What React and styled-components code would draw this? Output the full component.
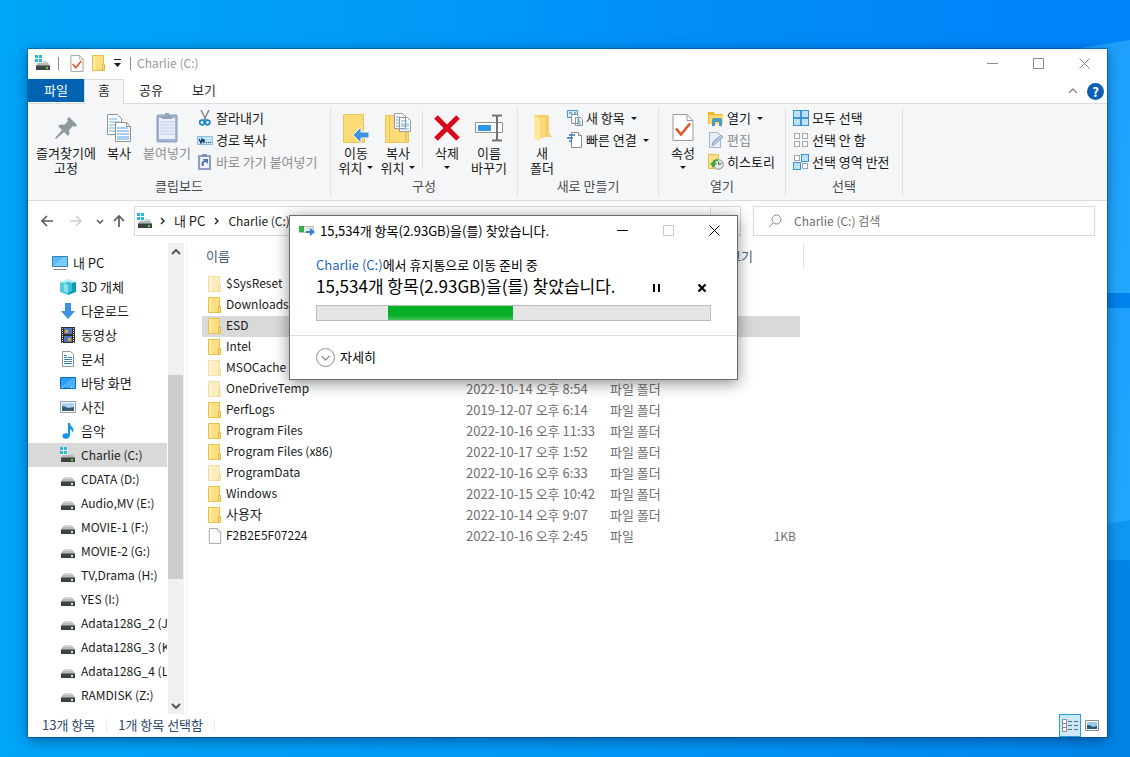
import { useState } from "react";
import styled, { createGlobalStyle } from "styled-components";

const GlobalStyle = createGlobalStyle`
  * {
    box-sizing: border-box;
  }
  body {
    margin: 0;
    font-family: "Noto Sans CJK KR", "Noto Sans", sans-serif;
    font-size: 13px;
    line-height: 15px;
    color: #1a1a1a;
  }
  button, input {
    font: inherit;
    color: inherit;
    border: none;
    background: none;
    padding: 0;
    margin: 0;
  }
  svg {
    display: block;
    flex: none;
  }
`;

const Desktop = styled.div`
  position: relative;
  display: flex;
  min-height: 100vh;
  padding: 49px 23px 20px 28px;
  background: linear-gradient(90deg, #00a5f7 0%, #0098f6 50%, #0086ee 100%);
`;
const Wallpaper = styled.svg`
  position: absolute;
  right: 0;
  top: 0;
  width: 100%;
  height: 100%;
`;
const Window = styled.main`
  position: relative;
  display: flex;
  flex-direction: column;
  flex: 1;
  min-width: 0;
  background: #ffffff;
  outline: 1px solid rgba(0, 70, 130, 0.45);
  box-shadow: 0 3px 12px rgba(0, 20, 60, 0.5);
`;
const Label = styled.span`
  padding-bottom: 2px;
  font-size: ${(props) => (props.$small ? 12 : 13)}px;
`;
const TitleBar = styled.header`
  display: flex;
  align-items: center;
  height: 30px;
  padding: 0 0 2px 7px;
  color: #999999;
`;
const QuickButton = styled.button`
  display: flex;
  align-items: center;
  justify-content: center;
  width: ${(props) => props.$width || 22}px;
  height: 22px;
`;
const Bar = styled.span`
  width: 1px;
  height: 13px;
  margin: 0 ${(props) => props.$gap || 6}px;
  background: #8a8a8a;
`;
const Caption = styled.div`
  display: flex;
  margin-left: auto;
`;
const CaptionButton = styled.button`
  display: flex;
  align-items: center;
  justify-content: center;
  width: 46px;
  height: 28px;
  color: ${(props) => props.$color || "#8a8a8a"};
`;
const Tabs = styled.nav`
  display: flex;
  height: 25px;
  border-bottom: 1px solid #dadbdc;
`;
const Tab = styled.button`
  width: ${(props) => props.$width}px;
  height: ${(props) => (props.$active ? 25 : 23)}px;
  padding-bottom: ${(props) => (props.$active ? 5 : 2)}px;
  color: ${(props) => (props.$file ? "#ffffff" : "#2a2a2a")};
  background: ${(props) => (props.$file ? "#0063b1" : props.$active ? "#f5f6f7" : "none")};
  border: solid #dadbdc;
  border-width: ${(props) => (props.$active ? "1px 1px 0 1px" : "0")};
`;
const TabTools = styled.div`
  display: flex;
  align-items: center;
  gap: 9px;
  margin-left: auto;
  padding-right: 3px;
  color: #8a8a8a;
`;
const Help = styled.button`
  width: 17px;
  height: 17px;
  border-radius: 50%;
  background: #0c5fb4;
  color: #ffffff;
  font-size: 13px;
  font-weight: 700;
  line-height: 17px;
`;
const Ribbon = styled.section`
  display: flex;
  height: 97px;
  padding: 3px 0;
  background: #f5f6f7;
  border-bottom: 1px solid #dadbdc;
`;
const Group = styled.div`
  display: flex;
  flex-direction: column;
  width: ${(props) => props.$width}px;
  border-right: 1px solid #e2e3e4;
`;
const GroupBody = styled.div`
  display: flex;
  height: 72px;
  padding-left: ${(props) => props.$left || 0}px;
`;
const GroupLabel = styled.div`
  line-height: 22px;
  text-align: center;
  color: #4a4a4a;
`;
const BigButton = styled.button`
  display: flex;
  flex-direction: column;
  align-items: center;
  width: ${(props) => props.$width || 42}px;
  padding-top: 3px;
  white-space: nowrap;
  color: ${(props) => (props.$off ? "#8d8d8d" : "inherit")};
`;
const BigIcon = styled.span`
  display: flex;
  align-items: center;
  height: 35px;
`;
const Line = styled.span`
  display: flex;
  align-items: center;
  gap: 5px;
  height: 15px;
`;
const SmallColumn = styled.div`
  display: flex;
  flex-direction: column;
  margin-left: ${(props) => props.$left || 0}px;
`;
const SmallButton = styled.button`
  display: flex;
  align-items: center;
  gap: 3px;
  height: 22px;
  white-space: nowrap;
  color: ${(props) => (props.$off ? "#8d8d8d" : "inherit")};
`;
const Divider = styled.span`
  width: 1px;
  height: 58px;
  margin: 4px 3px 0;
  background: #e2e3e4;
`;
const Caret = styled.span`
  margin-left: ${(props) => props.$left || 0}px;
  border: solid transparent;
  border-width: 3px 3px 0;
  border-top-color: #1a1a1a;
`;
const AddressRow = styled.div`
  display: flex;
  align-items: center;
  height: 42px;
  padding: 0 12px 2px 10px;
`;
const NavButton = styled.button`
  display: flex;
  align-items: center;
  justify-content: center;
  width: ${(props) => props.$width}px;
  height: 30px;
  color: ${(props) => (props.$off ? "#cfcfcf" : "#5c5c5c")};
`;
const AddressBox = styled.div`
  display: flex;
  align-items: center;
  flex: 616;
  height: 30px;
  padding-left: 2px;
  border: 1px solid #d9d9d9;
`;
const Crumb = styled.button`
  display: flex;
  align-items: center;
  height: 28px;
  padding: ${(props) => (props.$first ? "0 0 0 7px" : "0 9px")};
  white-space: nowrap;
`;
const AddressEnd = styled.span`
  width: 30px;
  height: 28px;
  margin-left: auto;
  border-left: 1px solid #d9d9d9;
`;
const SearchBox = styled.label`
  display: flex;
  align-items: center;
  flex: 333;
  gap: 12px;
  height: 30px;
  margin-left: 12px;
  padding-left: 14px;
  border: 1px solid #d9d9d9;
  color: #757575;
`;
const SearchInput = styled.input`
  flex: 1;
  min-width: 0;
  padding-bottom: 2px;
  font-size: 12px;
  outline: none;
  &::placeholder {
    color: #6d6d6d;
    opacity: 1;
  }
`;
const Body = styled.div`
  display: flex;
  flex: 1;
`;
const Tree = styled.nav`
  width: 140px;
  padding-top: 8px;
  overflow: hidden;
`;
const TreeItem = styled.button`
  display: flex;
  align-items: center;
  gap: 5px;
  width: 139px;
  height: 24px;
  padding-left: ${(props) => (props.$root ? 24 : 32)}px;
  overflow: hidden;
  white-space: nowrap;
  background: ${(props) => (props.$selected ? "#d9d9d9" : "none")};
`;
const Scrollbar = styled.div`
  display: flex;
  flex-direction: column;
  width: 16px;
  background: #f0f0f0;
  color: #505050;
`;
const ScrollButton = styled.button`
  display: flex;
  align-items: center;
  justify-content: center;
  height: 17px;
`;
const Track = styled.div`
  display: flex;
  flex-direction: column;
  flex: 1;
`;
const Space = styled.span`
  flex: ${(props) => props.$size};
`;
const Thumb = styled.span`
  flex: 204;
  margin-right: 1px;
  background: #cdcdcd;
`;
const Files = styled.section`
  flex: 1;
  min-width: 0;
  margin-left: 2px;
  padding-left: 15px;
  border-left: 1px solid #f3f3f3;
`;
const FileTable = styled.table`
  width: 602px;
  table-layout: fixed;
  border-collapse: separate;
  border-spacing: 0;
  th {
    height: 26px;
    padding: 0 4px 2px;
    font-weight: 400;
    text-align: left;
    color: #4c607a;
  }
  th:last-child {
    border-right: 1px solid #e2e2e2;
  }
  tbody::before {
    content: "";
    display: block;
    height: 5px;
  }
  td {
    height: 21px;
    padding: 0 4px 2px;
    color: #707070;
    white-space: nowrap;
  }
  td:nth-child(4) {
    font-size: 12px;
    text-align: right;
  }
`;
const FileRow = styled.tr`
  td:nth-child(-n + 4) {
    background: ${(props) => (props.$selected ? "#d9d9d9" : "none")};
  }
`;
const FileName = styled.span`
  display: flex;
  align-items: center;
  gap: 4px;
  padding-left: 2px;
  color: #1a1a1a;
`;
const StatusBar = styled.footer`
  display: flex;
  align-items: center;
  height: 23px;
  padding: 0 4px 0 14px;
  color: #2f4a6b;
`;
const StatusLine = styled.span`
  width: 1px;
  height: 13px;
  margin: 0 11px;
  background: #ebebeb;
`;
const ViewButton = styled.button`
  display: flex;
  align-items: center;
  justify-content: center;
  width: 22px;
  height: 23px;
  background: ${(props) => (props.$active ? "#cbe8f6" : "none")};
  border: 1px solid ${(props) => (props.$active ? "#26a0da" : "transparent")};
`;
const Dialog = styled.section`
  position: absolute;
  left: 289px;
  top: 215px;
  width: 449px;
  background: #ffffff;
  border: 1px solid #6b6b6b;
  box-shadow: 0 3px 14px rgba(0, 0, 0, 0.45);
`;
const DialogTitle = styled.header`
  display: flex;
  align-items: center;
  gap: 5px;
  height: 30px;
  padding: 0 0 2px 9px;
  color: #000000;
`;
const DialogBody = styled.div`
  padding: 11px 26px 14px;
  color: #000000;
`;
const Source = styled.a`
  color: #1b66c0;
  text-decoration: none;
`;
const StateRow = styled.div`
  display: flex;
  align-items: center;
  height: 26px;
  font-size: 17px;
`;
const StateButton = styled.button`
  display: flex;
  align-items: center;
  justify-content: center;
  width: 18px;
  height: 18px;
  margin: 5px 0 0 ${(props) => (props.$first ? "auto" : "28px")};
`;
const Progress = styled.div`
  height: 16px;
  margin-top: 7px;
  background: #e6e6e6;
  border: 1px solid #bcbcbc;
`;
const Chunk = styled.div`
  width: 32%;
  height: 14px;
  margin-left: 18%;
  background: linear-gradient(#06b025 65%, #45c05a);
`;
const DialogFooter = styled.footer`
  display: flex;
  height: 44px;
  padding-left: 26px;
  border-top: 1px solid #dfdfdf;
`;
const MoreButton = styled.button`
  display: flex;
  align-items: center;
  gap: 5px;
  color: #000000;
`;

function Chevron({ d = "M1 1l3 3-3 3", w = 5, h = 8, size = 1.3 }) {
  return (
    <svg width={w} height={h} viewBox={`0 0 ${w} ${h}`} fill="none" stroke="currentColor" strokeWidth={size}>
      <path d={d} />
    </svg>
  );
}

function Close({ size = 11, width = 1 }) {
  return (
    <svg width={size} height={size} viewBox="0 0 11 11" fill="none" stroke="currentColor" strokeWidth={width}>
      <path d="M.5.5l10 10M10.5.5l-10 10" />
    </svg>
  );
}

function Minimize() {
  return (
    <svg width="11" height="11" shapeRendering="crispEdges">
      <path d="M0 5h11v1H0z" fill="currentColor" />
    </svg>
  );
}

function Maximize() {
  return (
    <svg width="11" height="11" fill="none" stroke="currentColor">
      <path d="M.5.5h10v10H.5z" />
    </svg>
  );
}

function Drive({ system }) {
  return (
    <svg width="16" height="16" viewBox="0 0 16 16">
      <path d="M4 6h8l3 5H1z" fill="#d3d6d5" />
      <path d="M3 8h10l2 3H1z" fill="#b4b9b8" />
      <path d="M1 11h14v4H1z" fill="#3d4543" />
      <path d="M1 10h14v1H1z" fill="#79807e" />
      <path d="M11 12h2v2h-2z" fill={system ? "#5ad543" : "#d5e6dd"} />
      {system && (
        <>
          <path d="M0 0h8v8H0z" fill="#fff" opacity=".6" />
          <path d="M0 0h3v3H0zM4 0h3v3H4zM0 4h3v3H0zM4 4h3v3H4z" fill="#23b8e0" />
        </>
      )}
    </svg>
  );
}

function Folder({ w = 14, h = 16, pale }) {
  return (
    <svg width={w} height={h} viewBox="0 0 14 16" opacity={pale ? 0.5 : 1}>
      <path d="M.5.5h11v15H.5z" fill="#fbdf80" stroke="#e9bf4c" />
      <path d="M1 1h3v14H1z" fill="#fee99d" />
      <path d="M10.500 9.500h2v6h-2z" fill="#fbdf80" stroke="#e3b541" />
    </svg>
  );
}

function Page({ w = 14, h = 17, check }) {
  return (
    <svg width={w} height={h} viewBox="0 0 22 28" fill="none">
      <path d="M1 1h14l6 6v20H1z" fill="#fff" stroke="#9a9a9a" strokeWidth={w > 14 ? 1 : 1.5} />
      <path d="M15 1v6h6" stroke="#9a9a9a" />
      {check && <path d="M4 15l5 6L18 10" stroke="#e25822" strokeWidth="2.600" />}
    </svg>
  );
}

function Pin() {
  return (
    <svg width="22" height="22" viewBox="0 0 22 22" fill="#8e989f">
      <path d="M14 0l8 8-2 2-2-1-4 4c1 3 0 4-1 6l-4-4-8 7-1-1 7-8-4-4c2-1 3-2 6-1l4-4-1-2z" />
    </svg>
  );
}

function CopyPages() {
  return (
    <svg width="26" height="30" viewBox="0 0 26 30" fill="#fff" stroke="#929292">
      <path d="M1.500 1.500h10l4 4v16h-14z" />
      <path d="M3 6h8M3 9h10M3 12h10M3 15h10M3 18h10" stroke="#6eaee2" />
      <path d="M9.500 9.500h11l4 4v15h-15z" />
      <path d="M20.500 9.500v4h4" fill="none" />
      <path d="M11 15h11M11 18h12M11 21h12M11 24h12M11 26h12" stroke="#4f9ae0" />
    </svg>
  );
}

function Clipboard() {
  return (
    <svg width="22" height="31" viewBox="0 0 22 31">
      <rect x="1" y="3" width="20" height="27" rx="1" fill="#a3b3d2" stroke="#8c9dc0" />
      <path d="M3 6h16v21H3z" fill="#eaf0fb" />
      <path d="M4 10h14M4 13h14M4 16h14M4 19h14M4 22h14" stroke="#bccde6" />
      <path d="M6 7V4h3V1h4v3h3v3z" fill="#98a3b7" />
    </svg>
  );
}

function Scissors() {
  return (
    <svg width="16" height="16" viewBox="0 0 16 16" fill="none">
      <path d="M4 0l5 10M12 0L7 10" stroke="#7e8a96" strokeWidth="1.500" />
      <circle cx="5" cy="12.500" r="2.300" stroke="#1686c4" strokeWidth="1.700" />
      <circle cx="10.500" cy="12.500" r="2.300" stroke="#1686c4" strokeWidth="1.700" />
    </svg>
  );
}

function PathIcon() {
  return (
    <svg width="16" height="16" viewBox="0 0 16 16">
      <path d="M.5 4.500h15v8H.5z" fill="#c4e4fa" stroke="#87bde6" />
      <path d="M2 7l2 4 1-4 2 4V7" fill="none" stroke="#143050" strokeWidth="1.200" />
      <path d="M9 10h1v1H9zM11 10h1v1h-1zM13 10h1v1h-1z" fill="#143050" />
    </svg>
  );
}

function PasteShortcut() {
  return (
    <svg width="16" height="16" viewBox="0 0 16 16">
      <path d="M1 1h13v15H1z" fill="#8d9fc2" />
      <path d="M3 3h9v11H3z" fill="#eaf1fb" />
      <path d="M5 0h5v3H5z" fill="#8292ac" />
      <path d="M5 12c-1-3 0-5 2-5L6 5h5v5L9 8c-2 0-3 1-2 4z" fill="#5673a6" />
    </svg>
  );
}

function MoveTo() {
  return (
    <svg width="28" height="32" viewBox="0 0 28 32">
      <path d="M1.500 2.500h20v28h-20z" fill="#fbdc78" stroke="#e9c45c" />
      <path d="M20.500 20.500h2v10h-2z" fill="#fbdc78" stroke="#e9c45c" />
      <path d="M11 23l8-8v5h8v6h-8v5z" fill="#3d94dc" stroke="#f5f6f7" />
    </svg>
  );
}

function CopyTo() {
  return (
    <svg width="28" height="32" viewBox="0 0 28 32">
      <path d="M1.500 3.500h20v27h-20z" fill="#fbdc78" stroke="#e9c45c" />
      <path d="M5 4h1v26H5z" fill="#eac45f" />
      <path d="M22.500 20.500h2v10h-2z" fill="#fbdc78" stroke="#e9c45c" />
      <path d="M10.500 1.500h8l3 3v12h-11zM15.500 5.500h8l3 3v11h-11z" fill="#fff" stroke="#9a9a9a" />
      <path d="M17 9h6M17 12h8M17 14h8M17 17h8M12 5h4M12 8h3M12 11h3M12 14h3" stroke="#67a5db" />
    </svg>
  );
}

function Rename() {
  return (
    <svg width="28" height="28" viewBox="0 0 28 28" fill="none">
      <path d="M.5 8.500h27v10H.5z" fill="#fff" stroke="#929292" />
      <path d="M3 11h13v6H3z" fill="#3296e8" />
      <path d="M17 1.500h4l1 1 1-1h4M22 2v23M17 26.500h4l1-1 1 1h4" stroke="#737373" strokeWidth="2" />
    </svg>
  );
}

function NewFolder() {
  return (
    <svg width="21" height="30" viewBox="0 0 21 30">
      <path d="M2 2h15v18l3 4H2z" fill="#f4d06b" />
      <path d="M2 2l6 4v23l-6-4z" fill="#fee89b" />
      <path d="M8 6l5-2v20l-5 2z" fill="#f9da7e" />
    </svg>
  );
}

function NewItem() {
  return (
    <svg width="16" height="16" viewBox="0 0 16 16" fill="#fff" stroke="#8c959e">
      <path d="M.5.5h10v7H.5z" fill="#d4ecfb" stroke="#4198cf" />
      <path d="M2 3h3M7 3h2" stroke="#2471a8" />
      <path d="M4.500 4.500h5l2 2v7h-7zM8.500 7.500h5l2 2v6h-7z" />
      <path d="M10 10h3M10 12h4M10 14h4" stroke="#5a98cf" />
    </svg>
  );
}

function EasyAccess() {
  return (
    <svg width="16" height="16" viewBox="0 0 16 16" fill="#fff" stroke="#8c8c8c">
      <path d="M4.500.5h7l3 3v12h-10z" />
      <path d="M11.500.5v3h3" />
      <path d="M2 3h6M0 6h6M2 9h3" stroke="#2874c4" strokeWidth="1.300" />
    </svg>
  );
}

function OpenIcon() {
  return (
    <svg width="16" height="16" viewBox="0 0 16 16">
      <path d="M0 2h6l1 2h8v10H0z" fill="#ebb52f" />
      <path d="M1 5h14v9H1z" fill="#ffd766" />
      <path d="M4 16V10q0-2 2-2h6q2 0 2 2v6h-3v-4H7v4z" fill="#4a9bc9" />
    </svg>
  );
}

function EditIcon() {
  return (
    <svg width="16" height="16" viewBox="0 0 16 16">
      <path d="M1.500.5h8l3 3v12h-11z" fill="#e6eefa" stroke="#a4b5d2" />
      <path d="M4 14l1-4 8-7 2 2-8 7z" fill="#b4c7e5" stroke="#8ea5cb" />
    </svg>
  );
}

function HistoryIcon() {
  return (
    <svg width="16" height="16" viewBox="0 0 16 16">
      <path d="M.5.5h10v14H.5z" fill="#fbe08a" stroke="#e3bd50" />
      <circle cx="10.500" cy="10.500" r="4.800" fill="#e4e6e8" stroke="#8b8f92" />
      <path d="M10.500 7.500v3l3-1" fill="none" stroke="#5d6366" />
      <path d="M9 5C5 5 4 9 4 9H2l3 5 4-5H7q0-2 3-2z" fill="#43a83c" />
    </svg>
  );
}

// which = indexes of the filled squares
function Squares({ which }) {
  return (
    <svg width="16" height="16" viewBox="0 0 16 16">
      {[0, 1, 2, 3].map((i) => {
        const on = which.includes(i);
        return (
          <rect
            key={i}
            x={(i % 2) * 8 + (on ? 0.5 : 1.5)}
            y={(i > 1 ? 8 : 0) + (on ? 0.5 : 1.5)}
            width={on ? 7 : 5}
            height={on ? 7 : 5}
            fill={on ? "#bfe2fb" : "#fff"}
            stroke={on ? "#3b92d6" : "#a6a6a6"}
          />
        );
      })}
    </svg>
  );
}

function Arrow({ d }) {
  return (
    <svg width="14" height="14" viewBox="0 0 14 14" fill="none" stroke="currentColor" strokeWidth="1.700">
      <path d={d} />
    </svg>
  );
}

function TreeIcon({ kind }) {
  if (kind === "drive" || kind === "system") return <Drive system={kind === "system"} />;
  if (kind === "doc") {
    return (
      <svg width="16" height="16" viewBox="0 0 16 16">
        <path d="M2.500.5h8l3 3v12h-11z" fill="#fff" stroke="#8e979e" />
        <path d="M4 4.500h3M4 6.500h3M8 6.500h4M4 8.500h8M4 10.500h3M8 10.500h4M4 12.500h8" stroke="#3585bd" />
      </svg>
    );
  }
  return (
    <svg width="16" height="16" viewBox="0 0 16 16">
      {kind === "pc" && (
        <>
          <path d="M.5 1.500h15v10H.5z" fill="#5bbcf4" stroke="#3484bb" />
          <path d="M1 11L12 2h3v9z" fill="#8fd3f9" opacity=".6" />
          <path d="M2 14h12l1 1H1z" fill="#7e8b94" />
        </>
      )}
      {kind === "cube" && (
        <>
          <path d="M0 3l8-3 8 3-8 3z" fill="#b2ecf2" />
          <path d="M0 3l8 2v11l-8-3z" fill="#54cbdc" />
          <path d="M8 5l8-2v10l-8 3z" fill="#109db5" />
          <path d="M4 4l4-1 4 1v8l-4 2-4-2z" fill="#3bbfd2" />
          <path d="M4 4l4 2v8l-4-2z" fill="#8ce1ec" />
        </>
      )}
      {kind === "down" && <path d="M5 0h6v8h4l-7 8-7-8h4z" fill="#3d92e0" />}
      {kind === "video" && (
        <>
          <path d="M1 0h14v16H1z" fill="#2e2e2e" />
          <path d="M4 1h8v6H4zM4 9h8v6H4z" fill="#5674b8" />
          <path d="M5 3h3v3H5zM8 11h3v3H8z" fill="#e4a43c" />
          <path d="M2.500 1v15M13.500 1v15" stroke="#e8e8e8" strokeDasharray="1 1" />
        </>
      )}
      {kind === "desktop" && (
        <>
          <path d="M.5 2.500h15v11H.5z" fill="#2a9df4" stroke="#0b6fc0" />
          <path d="M1 12L13 3h2v9z" fill="#48b1fa" />
          <path d="M2 12h1v1H2zM11 12h1v1h-1zM13 12h1v1h-1z" fill="#fff" />
        </>
      )}
      {kind === "photo" && (
        <>
          <path d="M.5 2.500h15v11H.5z" fill="#fff" stroke="#98a0a8" />
          <path d="M2 4h12v8H2z" fill="#a7d5f2" />
          <path d="M2 7q3 0 6 2l6-1v4H2z" fill="#355f7c" />
        </>
      )}
      {kind === "music" && (
        <>
          <ellipse cx="6" cy="13" rx="3.500" ry="2.700" fill="#1592e4" />
          <path d="M8 0h2c0 4 5 4 3 10-1-3-2-3-3-4v7H8z" fill="#1592e4" />
        </>
      )}
    </svg>
  );
}

const TREE = [
  ["pc", "내 PC"],
  ["cube", "3D 개체"],
  ["down", "다운로드"],
  ["video", "동영상"],
  ["doc", "문서"],
  ["desktop", "바탕 화면"],
  ["photo", "사진"],
  ["music", "음악"],
  ["system", "Charlie (C:)"],
  ["drive", "CDATA (D:)"],
  ["drive", "Audio,MV (E:)"],
  ["drive", "MOVIE-1 (F:)"],
  ["drive", "MOVIE-2 (G:)"],
  ["drive", "TV,Drama (H:)"],
  ["drive", "YES (I:)"],
  ["drive", "Adata128G_2 (J:)"],
  ["drive", "Adata128G_3 (K:)"],
  ["drive", "Adata128G_4 (L:)"],
  ["drive", "RAMDISK (Z:)"],
];

const FILES = [
  { name: "$SysReset", date: "", hidden: true },
  { name: "Downloads", date: "" },
  { name: "ESD", date: "" },
  { name: "Intel", date: "" },
  { name: "MSOCache", date: "", hidden: true },
  { name: "OneDriveTemp", date: "2022-10-14 오후 8:54", hidden: true },
  { name: "PerfLogs", date: "2019-12-07 오후 6:14" },
  { name: "Program Files", date: "2022-10-16 오후 11:33" },
  { name: "Program Files (x86)", date: "2022-10-17 오후 1:52" },
  { name: "ProgramData", date: "2022-10-16 오후 6:33", hidden: true },
  { name: "Windows", date: "2022-10-15 오후 10:42" },
  { name: "사용자", date: "2022-10-14 오후 9:07" },
  { name: "F2B2E5F07224", date: "2022-10-16 오후 2:45", size: "1KB" },
];

const isLatin = (text) => !/[가-힣]/.test(text);

function Big({ icon, lines, caret, width, off }) {
  return (
    <BigButton $width={width} $off={off} disabled={off}>
      <BigIcon>{icon}</BigIcon>
      {lines.map((line, i) => (
        <Line key={i}>
          {line}
          {caret && i === lines.length - 1 && <Caret />}
        </Line>
      ))}
    </BigButton>
  );
}

function Small({ icon, label, caret, off }) {
  return (
    <SmallButton $off={off} disabled={off}>
      {icon}
      <Label>{label}</Label>
      {caret && <Caret $left={3} />}
    </SmallButton>
  );
}

function RibbonBar() {
  return (
    <Ribbon>
      <Group $width={303}>
        <GroupBody $left={6}>
          <Big icon={<Pin />} lines={["즐겨찾기에", "고정"]} width={64} />
          <Big icon={<CopyPages />} lines={["복사"]} width={42} />
          <Big icon={<Clipboard />} lines={["붙여넣기"]} width={54} off />
          <SmallColumn $left={3}>
            <Small icon={<Scissors />} label="잘라내기" />
            <Small icon={<PathIcon />} label="경로 복사" />
            <Small icon={<PasteShortcut />} label="바로 가기 붙여넣기" off />
          </SmallColumn>
        </GroupBody>
        <GroupLabel>클립보드</GroupLabel>
      </Group>
      <Group $width={187}>
        <GroupBody $left={4}>
          <Big icon={<MoveTo />} lines={["이동", "위치"]} caret />
          <Big icon={<CopyTo />} lines={["복사", "위치"]} caret />
          <Divider />
          <Big
            icon={
              <svg width="26" height="26" viewBox="0 0 26 26">
                <path d="M2 2l22 22M24 2L2 24" stroke="#d9071b" strokeWidth="5" />
              </svg>
            }
            lines={["삭제", ""]}
            caret
          />
          <Big icon={<Rename />} lines={["이름", "바꾸기"]} />
        </GroupBody>
        <GroupLabel>구성</GroupLabel>
      </Group>
      <Group $width={141}>
        <GroupBody $left={3}>
          <Big icon={<NewFolder />} lines={["새", "폴더"]} />
          <SmallColumn $left={4}>
            <Small icon={<NewItem />} label="새 항목" caret />
            <Small icon={<EasyAccess />} label="빠른 연결" caret />
          </SmallColumn>
        </GroupBody>
        <GroupLabel>새로 만들기</GroupLabel>
      </Group>
      <Group $width={127}>
        <GroupBody $left={3}>
          <Big icon={<Page w={22} h={29} check />} lines={["속성", ""]} caret />
          <SmallColumn $left={4}>
            <Small icon={<OpenIcon />} label="열기" caret />
            <Small icon={<EditIcon />} label="편집" off />
            <Small icon={<HistoryIcon />} label="히스토리" />
          </SmallColumn>
        </GroupBody>
        <GroupLabel>열기</GroupLabel>
      </Group>
      <Group $width={117}>
        <GroupBody $left={7}>
          <SmallColumn>
            <Small icon={<Squares which={[0, 1, 2, 3]} />} label="모두 선택" />
            <Small icon={<Squares which={[]} />} label="선택 안 함" />
            <Small icon={<Squares which={[1, 2]} />} label="선택 영역 반전" />
          </SmallColumn>
        </GroupBody>
        <GroupLabel>선택</GroupLabel>
      </Group>
    </Ribbon>
  );
}

function CopyDialog() {
  return (
    <Dialog role="dialog" aria-label="15,534개 항목(2.93GB)을(를) 찾았습니다.">
      <DialogTitle>
        <svg width="16" height="16" viewBox="0 0 16 16">
          <path d="M.5 4.500h14v6H.5z" fill="#dfe4e6" stroke="#b6bcc0" />
          <path d="M0 4h5v6H0z" fill="#2fae45" />
          <path d="M7 9h4V6l5 4-5 4v-3H7z" fill="#2f86d2" />
        </svg>
        <span>15,534개 항목(2.93GB)을(를) 찾았습니다.</span>
        <Caption>
          <CaptionButton $color="#000000" aria-label="최소화"><Minimize /></CaptionButton>
          <CaptionButton $color="#c8c8c8" aria-label="최대화"><Maximize /></CaptionButton>
          <CaptionButton $color="#000000" aria-label="닫기"><Close /></CaptionButton>
        </Caption>
      </DialogTitle>
      <DialogBody>
        <div>
          <Source href="#">Charlie (C:)</Source>에서 휴지통으로 이동 준비 중
        </div>
        <StateRow>
          <span>15,534개 항목(2.93GB)을(를) 찾았습니다.</span>
          <StateButton $first aria-label="일시 중지">
            <svg width="7" height="8" shapeRendering="crispEdges">
              <path d="M0 0h2v8H0zM5 0h2v8H5z" />
            </svg>
          </StateButton>
          <StateButton aria-label="취소"><Close size={8} width={3} /></StateButton>
        </StateRow>
        <Progress role="progressbar">
          <Chunk />
        </Progress>
      </DialogBody>
      <DialogFooter>
        <MoreButton>
          <svg width="19" height="19" viewBox="0 0 19 19" fill="none" stroke="#8f8f8f">
            <circle cx="9.500" cy="9.500" r="9" />
            <path d="M5.500 8l4 4 4-4" strokeWidth="1.300" />
          </svg>
          <Label>자세히</Label>
        </MoreButton>
      </DialogFooter>
    </Dialog>
  );
}

function App() {
  const [folder, setFolder] = useState("Charlie (C:)");
  const [file, setFile] = useState("ESD");
  const [query, setQuery] = useState("");

  return (
    <Desktop>
      <GlobalStyle />
      <Wallpaper viewBox="0 0 1130 757" preserveAspectRatio="none">
        <defs>
          <linearGradient id="pane" x1="0" y1="0" x2="0" y2="1">
            <stop offset="0" stopColor="#1ea0fc" />
            <stop offset="1" stopColor="#22a8ff" />
          </linearGradient>
          <linearGradient id="top" x1="0" y1="0" x2="1" y2="0">
            <stop offset="0.3" stopColor="#0088fa" stopOpacity="0" />
            <stop offset="1" stopColor="#0084fa" />
          </linearGradient>
        </defs>
        <path d="M0 0h1130v60H0z" fill="url(#top)" />
        <path d="M1070 50l60-10v520H1070z" fill="#0f97f4" />
        <path d="M1070 50l60-10v253h-60z" fill="url(#pane)" />
        <path d="M1070 293h60v15h-60z" fill="#0081ed" />
        <path d="M1070 308h60v212l-60 10z" fill="url(#pane)" />
        <path d="M1070 556l60 6v195h-60z" fill="#0085e6" />
      </Wallpaper>
      <Window>
        <TitleBar>
          <Drive system />
          <Bar $gap={7} />
          <QuickButton aria-label="속성"><Page check /></QuickButton>
          <QuickButton aria-label="새 폴더"><Folder /></QuickButton>
          <QuickButton $width={14} aria-label="빠른 실행 도구 모음">
            <svg width="7" height="8">
              <path d="M0 0h7v1H0zM0 4h7L3.500 8z" fill="#1a1a1a" />
            </svg>
          </QuickButton>
          <Bar />
          <Label $small>Charlie (C:)</Label>
          <Caption>
            <CaptionButton aria-label="최소화"><Minimize /></CaptionButton>
            <CaptionButton aria-label="최대화"><Maximize /></CaptionButton>
            <CaptionButton aria-label="닫기"><Close /></CaptionButton>
          </Caption>
        </TitleBar>
        <Tabs>
          <Tab $width={56} $file>파일</Tab>
          <Tab $width={40} $active>홈</Tab>
          <Tab $width={54}>공유</Tab>
          <Tab $width={52}>보기</Tab>
          <TabTools>
            <Chevron d="M1 5l4-4 4 4" w={10} h={6} />
            <Help aria-label="도움말">?</Help>
          </TabTools>
        </Tabs>
        <RibbonBar />
        <AddressRow>
          <NavButton $width={18} aria-label="뒤로"><Arrow d="M13 7H2M7 2L2 7l5 5" /></NavButton>
          <NavButton $width={40} $off aria-label="앞으로"><Arrow d="M1 7h11M7 2l5 5-5 5" /></NavButton>
          <NavButton $width={8} aria-label="최근 위치"><Chevron d="M1 1l3 3 3-3" w={8} h={5} size={1.6} /></NavButton>
          <NavButton $width={30} aria-label="위로"><Arrow d="M7 13V2M2 7l5-5 5 5" /></NavButton>
          <AddressBox>
            <Drive system />
            <Crumb $first aria-label="위치"><Chevron /></Crumb>
            <Crumb><Label>내 PC</Label></Crumb>
            <Chevron />
            <Crumb><Label $small>Charlie (C:)</Label></Crumb>
            <AddressEnd />
          </AddressBox>
          <SearchBox>
            <svg width="14" height="14" viewBox="0 0 14 14" fill="none" stroke="#8a8a8a">
              <circle cx="8.500" cy="5.500" r="4.500" />
              <path d="M5 9l-4 4" />
            </svg>
            <SearchInput
              aria-label="검색"
              placeholder="Charlie (C:) 검색"
              value={query}
              onChange={(e) => setQuery(e.target.value)}
            />
          </SearchBox>
        </AddressRow>
        <Body>
          <Tree>
            {TREE.map(([kind, label]) => (
              <TreeItem
                key={label}
                $root={kind === "pc"}
                $selected={label === folder}
                onClick={() => setFolder(label)}
              >
                <TreeIcon kind={kind} />
                <Label $small={isLatin(label)}>{label}</Label>
              </TreeItem>
            ))}
          </Tree>
          <Scrollbar>
            <ScrollButton aria-label="위로 스크롤"><Chevron d="M1 5l4-4 4 4" w={10} h={6} size={1.8} /></ScrollButton>
            <Track>
              <Space $size={115} />
              <Thumb />
              <Space $size={118} />
            </Track>
            <ScrollButton aria-label="아래로 스크롤"><Chevron d="M1 1l4 4 4-4" w={10} h={6} size={1.8} /></ScrollButton>
          </Scrollbar>
          <Files>
            <FileTable>
              <colgroup>
                <col style={{ width: 260 }} />
                <col style={{ width: 144 }} />
                <col style={{ width: 119 }} />
                <col style={{ width: 75 }} />
                <col />
              </colgroup>
              <thead>
                <tr>
                  <th>이름</th>
                  <th>수정한 날짜</th>
                  <th>유형</th>
                  <th>크기</th>
                  <th />
                </tr>
              </thead>
              <tbody>
                {FILES.map((row) => (
                  <FileRow key={row.name} $selected={row.name === file} onClick={() => setFile(row.name)}>
                    <td>
                      <FileName>
                        {row.size ? <Page w={14} h={16} /> : <Folder pale={row.hidden} />}
                        <Label as="span" $small={isLatin(row.name)}>{row.name}</Label>
                      </FileName>
                    </td>
                    <td>{row.date}</td>
                    <td>{row.size ? "파일" : "파일 폴더"}</td>
                    <td>{row.size}</td>
                    <td />
                  </FileRow>
                ))}
              </tbody>
            </FileTable>
          </Files>
        </Body>
        <StatusBar>
          <Label>13개 항목</Label>
          <StatusLine />
          <Label>1개 항목 선택함</Label>
          <StatusLine />
          <Caption>
            <ViewButton $active aria-label="자세히">
              <svg width="17" height="13" viewBox="0 0 17 13" fill="#fff" stroke="#8c8c8c">
                <path d="M.5.5h4v12h-4zM.5 4.500h4M.5 8.500h4" />
                <path d="M6 2.500h4M12 2.500h4M6 6.500h4M12 6.500h4M6 10.500h4M12 10.500h4" stroke="#5c6a72" />
              </svg>
            </ViewButton>
            <ViewButton aria-label="큰 아이콘">
              <svg width="14" height="11" viewBox="0 0 14 11">
                <path d="M.5.5h13v10H.5z" fill="#fff" stroke="#8f8f8f" />
                <path d="M2 2h10v7H2z" fill="#9ccbed" />
                <path d="M2 5q4 0 6 2l4-1v3H2z" fill="#2c5877" />
              </svg>
            </ViewButton>
          </Caption>
        </StatusBar>
      </Window>
      <CopyDialog />
    </Desktop>
  );
}

export default App;
